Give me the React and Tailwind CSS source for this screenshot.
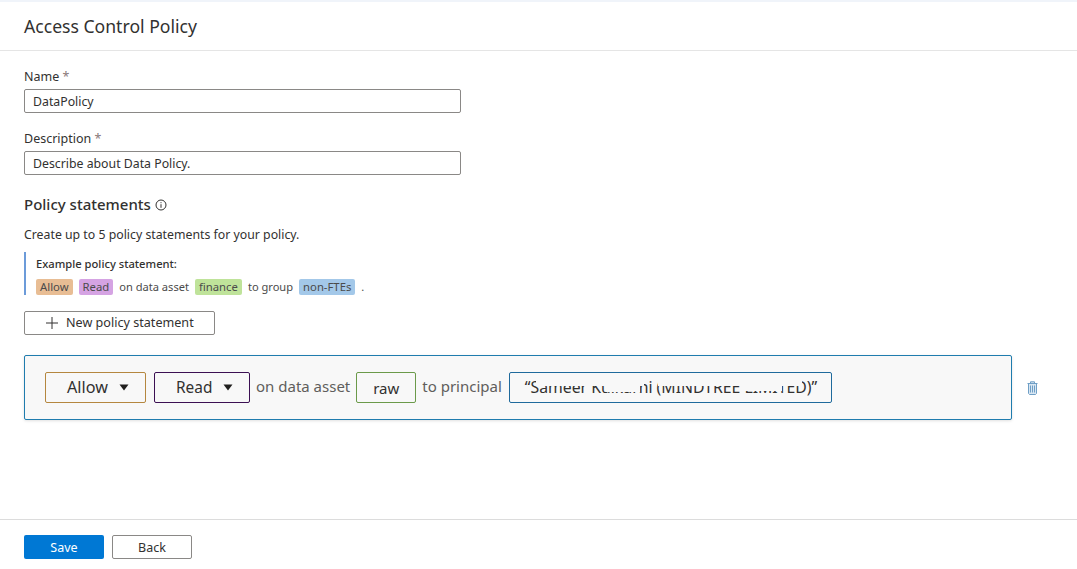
const font = { fontFamily: '"Noto Sans", "Open Sans", sans-serif' };

function Field({ label, value, mt }) {
  return (
    <div className={mt}>
      <div className="h-[20px] text-[12.5px] leading-[20px] text-[#323130]">
        {label} <span className="text-[#8a7a7a]">*</span>
      </div>
      <div className="mt-[2px] flex h-[24px] w-[437px] items-center rounded-[2px] border border-[#8a8886] pl-[8px] pt-[2px] text-[12.3px] text-[#323130]">
        {value}
      </div>
    </div>
  );
}

function Tag({ color, children }) {
  return <span className={`flex h-[16px] items-center rounded-[2px] px-[4px] text-[11.3px] text-[#4b4b4b] ${color}`}>{children}</span>;
}

function Caret() {
  return (
    <svg width="10" height="7" viewBox="0 0 10 7" className="block shrink-0">
      <path d="M0.5 0.5h9L5 6.5z" fill="#201f1e" />
    </svg>
  );
}

function Trash() {
  return (
    <svg width="11" height="14" viewBox="0 0 11 14" fill="#d8e6f2" stroke="#6f9fc6" strokeWidth="1" className="block">
      <path d="M0.5 2.5h10M3.5 2.5V0.8h4v1.7M1.5 2.5v10l1 1h6l1-1V2.5z" />
      <path d="M3.5 4.5v7M5.5 4.5v7M7.5 4.5v7" />
    </svg>
  );
}

export default function App() {
  return (
    <div style={font} className="flex h-[569px] w-[1077px] flex-col overflow-hidden bg-white">
      <div className="h-[2px] shrink-0 bg-[#f0f4fa]" />
      <header className="flex h-[49px] shrink-0 items-center border-b border-[#e5e5e5] pl-[24px] pt-[1px] text-[17.6px] text-[#323130]">
        Access Control Policy
      </header>
      <main className="flex-1 pl-[24px]">
        <Field label="Name" value="DataPolicy" mt="mt-[16px]" />
        <Field label="Description" value="Describe about Data Policy." mt="mt-[16px]" />
        <div className="mt-[18px] flex h-[23px] items-center gap-[4px] text-[15px] font-medium text-[#323130]">
          Policy statements
          <svg width="12" height="12" viewBox="0 0 12 12" fill="none" stroke="#323130">
            <circle cx="6" cy="6" r="5" />
            <path d="M6 5.2v3.6M6 3.2v1" />
          </svg>
        </div>
        <p className="mt-[9px] h-[20px] text-[12.3px] leading-[20px] text-[#323130]">Create up to 5 policy statements for your policy.</p>
        <div className="mt-[7px] h-[43px] border-l-2 border-[#6c9bd9] pl-[10px]">
          <div className="h-[27px] text-[11.2px] font-medium leading-[24px] text-[#323130]">Example policy statement:</div>
          <div className="flex items-center gap-[6px] text-[11.1px] text-[#4b4b4b]">
            <Tag color="bg-[#e8bd94]">Allow</Tag>
            <Tag color="bg-[#d5a3e3]">Read</Tag>
            <span>on data asset</span>
            <Tag color="bg-[#bfe39a]">finance</Tag>
            <span>to group</span>
            <Tag color="bg-[#a3c8e9]">non-FTEs</Tag>
            <span>.</span>
          </div>
        </div>
        <button className="mt-[16px] flex h-[24px] w-[191px] items-center rounded-[2px] border border-[#8a8886] pl-[21px] text-[12.6px] text-[#323130]">
          <svg width="12" height="12" viewBox="0 0 12 12" stroke="#323130" strokeWidth="1" className="mr-[8px]">
            <path d="M6 0v12M0 6h12" />
          </svg>
          New policy statement
        </button>
        <div className="mt-[20px] flex items-center">
          <div className="flex h-[65px] w-[988px] items-center rounded-[2px] border border-[#1f7cae] bg-[#f8f8f8] pl-[20px] shadow-[0_1px_3px_rgba(0,0,0,0.12)]">
            <div className="flex h-[31px] w-[101px] items-center rounded-[2px] border border-[#b5873f] pl-[21px] text-[16.2px] text-[#323130]">
              Allow<span className="ml-[11px]"><Caret /></span>
            </div>
            <div className="ml-[8px] flex h-[31px] w-[96px] items-center rounded-[2px] border border-[#3c1053] pl-[21px] text-[15.4px] text-[#323130]">
              Read<span className="ml-[11px]"><Caret /></span>
            </div>
            <span className="ml-[6px] pb-[2px] text-[15px] text-[#605e5c]">on data asset</span>
            <div className="ml-[6px] flex h-[31px] w-[60px] items-center justify-center rounded-[2px] border border-[#6b9a4a] pt-[2px] text-[15px] text-[#323130]">raw</div>
            <span className="ml-[6px] pb-[2px] text-[15px] text-[#605e5c]">to principal</span>
            <div className="relative ml-[7px] flex h-[31px] w-[323px] items-center overflow-hidden rounded-[2px] border border-[#1f6a9c] pl-[15px] text-[15.8px] text-[#323130]">
              “Sameer Kulkarni (MINDTREE LIMITED)”
              <span className="absolute left-[26px] top-[6px] h-[7px] w-[108px] bg-[#f8f8f8] blur-[0.5px]" />
              <span className="absolute left-[148px] top-[5px] h-[8px] w-[144px] bg-[#f8f8f8] blur-[0.5px]" />
              <span className="absolute left-[230px] top-[12px] h-[6px] w-[42px] bg-[#f8f8f8] blur-[0.5px]" />
              <span className="absolute left-[96px] top-[12px] h-[7px] w-[34px] bg-[#f8f8f8] blur-[0.5px]" />
            </div>
          </div>
          <span className="ml-[15px]"><Trash /></span>
        </div>
      </main>
      <footer className="flex h-[50px] shrink-0 items-start gap-[8px] border-t border-[#dcdcdc] pl-[24px] pt-[15px] text-[12.5px]">
        <button className="h-[24px] w-[80px] rounded-[2px] bg-[#0078d4] pt-[2px] text-white">Save</button>
        <button className="h-[24px] w-[80px] rounded-[2px] border border-[#8a8886] pt-[2px] text-[#323130]">Back</button>
      </footer>
    </div>
  );
}
